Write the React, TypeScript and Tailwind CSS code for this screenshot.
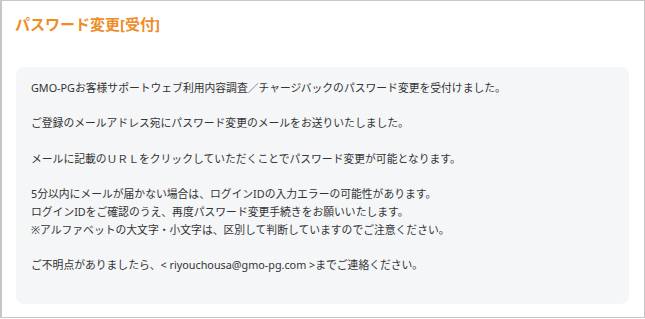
import React from "react";

export default function App() {
  const font = { fontFamily: '"Noto Sans", "Noto Sans CJK JP", sans-serif' };
  return (
    <div className="w-[645px] h-[319px] bg-white" style={font}>
      <div className="w-[645px] h-[318px] border border-l-2 border-[#c6c6c6] bg-white flex flex-col">
        <h1 className="mt-[13px] ml-[13px] h-[20px] text-[15px] leading-[20px] font-bold text-[#ee8d28]">
          パスワード変更[受付]
        </h1>
        <div className="mt-[33px] ml-[14px] w-[613px] h-[237px] rounded-[8px] bg-[#f5f6f8] pt-[12px] pl-[15px] text-[10.8px] leading-[17.7px] text-[#333333]">
          <p>GMO-PGお客様サポートウェブ利用内容調査／チャージバックのパスワード変更を受付けました。</p>
          <p className="mt-[17.7px]">ご登録のメールアドレス宛にパスワード変更のメールをお送りいたしました。</p>
          <p className="mt-[17.7px]">メールに記載のＵＲＬをクリックしていただくことでパスワード変更が可能となります。</p>
          <p className="mt-[17.7px]">
            5分以内にメールが届かない場合は、ログインIDの入力エラーの可能性があります。
            <br />
            ログインIDをご確認のうえ、再度パスワード変更手続きをお願いいたします。
            <br />
            ※アルファベットの大文字・小文字は、区別して判断していますのでご注意ください。
          </p>
          <p className="mt-[17.7px]">ご不明点がありましたら、&lt; riyouchousa@gmo-pg.com &gt;までご連絡ください。</p>
        </div>
      </div>
    </div>
  );
}
